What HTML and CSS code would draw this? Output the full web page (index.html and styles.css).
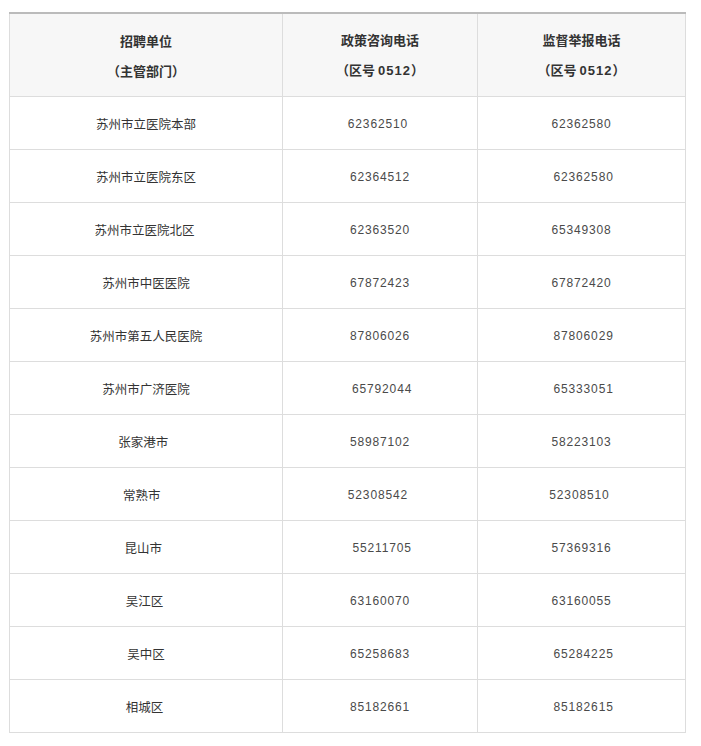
FILE: index.html
```html
<!DOCTYPE html>
<html lang="zh-CN">
<head>
<meta charset="utf-8">
<title>联系电话</title>
<link rel="stylesheet" href="styles.css">
</head>
<body>
<div class="page">
<table class="phones">
<colgroup>
<col class="c1"><col class="c2"><col class="c3">
</colgroup>
<thead>
<tr>
<th><span class="hl">招聘单位</span><span class="hl">（主管部门）</span></th>
<th><span class="hl">政策咨询电话</span><span class="hl">（区号 <span class="num">0512</span>）</span></th>
<th><span class="hl">监督举报电话</span><span class="hl">（区号 <span class="num">0512</span>）</span></th>
</tr>
</thead>
<tbody>
<tr><td class="name">苏州市立医院本部</td><td class="num">62362510&nbsp;</td><td class="num">62362580</td></tr>
<tr><td class="name">苏州市立医院东区</td><td class="num">62364512</td><td class="num">&nbsp;62362580</td></tr>
<tr><td class="name">苏州市立医院北区&nbsp;</td><td class="num">62363520</td><td class="num">65349308</td></tr>
<tr><td class="name">苏州市中医医院</td><td class="num">67872423</td><td class="num">67872420</td></tr>
<tr><td class="name">苏州市第五人民医院</td><td class="num">87806026</td><td class="num">&nbsp;87806029</td></tr>
<tr><td class="name">苏州市广济医院</td><td class="num">&nbsp;65792044</td><td class="num">&nbsp;65333051</td></tr>
<tr><td class="name">张家港市&nbsp;&nbsp;</td><td class="num">58987102</td><td class="num">58223103</td></tr>
<tr><td class="name">常熟市&nbsp;&nbsp;&nbsp;</td><td class="num">52308542&nbsp;</td><td class="num">52308510&nbsp;</td></tr>
<tr><td class="name">昆山市&nbsp;&nbsp;</td><td class="num">&nbsp;55211705</td><td class="num">57369316</td></tr>
<tr><td class="name">吴江区&nbsp;</td><td class="num">63160070</td><td class="num">63160055</td></tr>
<tr><td class="name">吴中区</td><td class="num">65258683</td><td class="num">&nbsp;65284225</td></tr>
<tr><td class="name">相城区&nbsp;</td><td class="num">85182661</td><td class="num">&nbsp;85182615</td></tr>
</tbody>
</table>
</div>
</body>
</html>
```

FILE: styles.css
```css
html, body {
  margin: 0;
  padding: 0;
  background: #ffffff;
}

.page {
  padding: 12px 0 0 9px;
  font-family: "Noto Sans CJK SC", "Liberation Sans", sans-serif;
  color: #333333;
}

.phones {
  width: 676px;
  table-layout: fixed;
  border-collapse: collapse;
  border: 1px solid #dddddd;
  border-top: 2px solid #bbbbbb;
}

.c1 { width: 273px; }
.c2 { width: 195px; }
.c3 { width: 208px; }

.phones th,
.phones td {
  border: 1px solid #dddddd;
  text-align: center;
  padding: 0;
}

.phones th {
  background: #f7f7f7;
  border-top: 2px solid #bbbbbb;
  font-size: 13px;
  font-weight: bold;
  color: #333333;
  height: 81px;
  padding-top: 1px;
}

.hl {
  display: block;
  line-height: 30px;
}

.phones th .num {
  font-family: "Liberation Sans", sans-serif;
  font-weight: bold;
  letter-spacing: 1px;
  color: #333333;
}

.phones td {
  height: 51px;
  line-height: 20px;
  padding-top: 1px;
}

.phones td.name {
  font-size: 12.5px;
  color: #333333;
}

.phones td.num {
  font-family: "Liberation Sans", sans-serif;
  font-size: 12px;
  letter-spacing: 0.85px;
  color: #4a4a4a;
}
```
